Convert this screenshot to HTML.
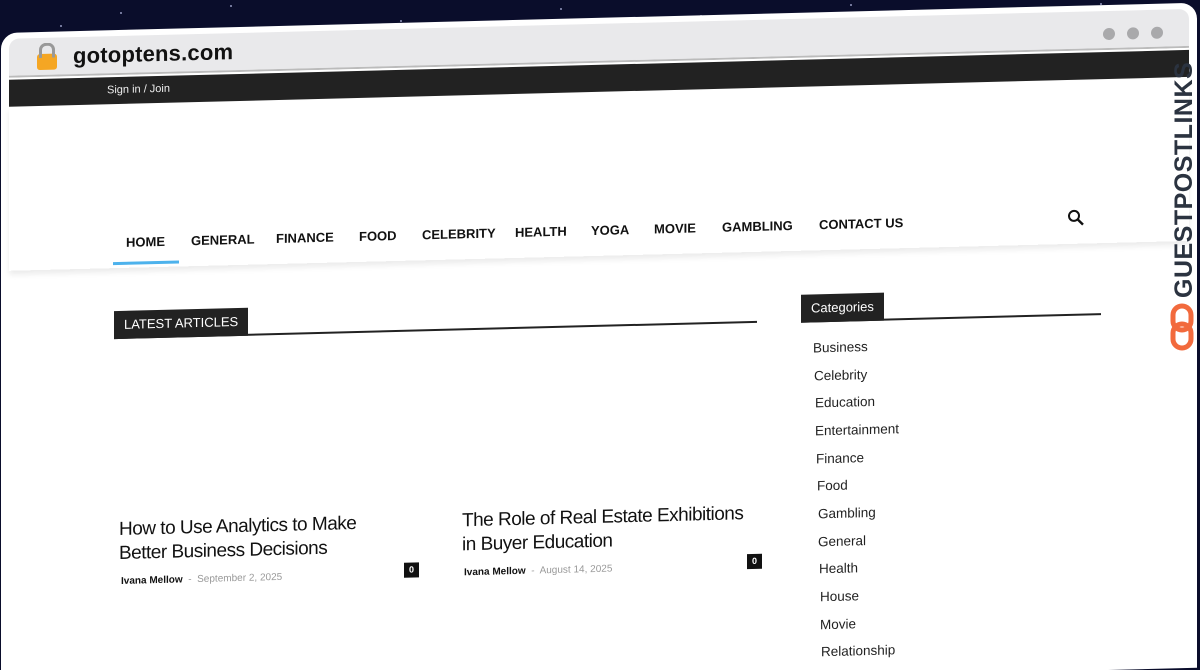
<!DOCTYPE html>
<html><head><meta charset="utf-8"><style>
*{margin:0;padding:0;box-sizing:border-box}
html{height:670px;overflow:hidden}
body{width:1200px;height:670px;overflow:hidden;background:#0a0d2b;font-family:"Liberation Sans","DejaVu Sans",sans-serif;position:relative}
.star{position:absolute;width:2px;height:2px;background:#cfd3ff;border-radius:50%;opacity:.7}
#br{position:absolute;left:1px;top:33px;width:1196px;height:665px;background:#fff;border-radius:16px 16px 0 0;transform:skewY(-1.45deg);transform-origin:0 0;overflow:hidden}
#gray{position:absolute;left:8px;top:6px;right:8px;height:39px;background:#e9e9eb;border-radius:10px 10px 0 0;border-bottom:2px solid #bbb}
#url{position:absolute;left:64px;top:6px;font-size:22px;color:#111;font-weight:bold;letter-spacing:.2px}
.lock{position:absolute;left:28px;top:16px;width:20px;height:16px;background:#f5a623;border-radius:3px}
.lock:before{content:"";position:absolute;left:2px;top:-11px;width:10px;height:12px;border:3px solid #999;border-bottom:none;border-radius:7px 7px 0 0}
.dot{position:absolute;top:17px;width:12px;height:12px;border-radius:50%;background:#a9a9ab}
#dark{position:absolute;left:8px;top:47px;right:8px;height:27px;background:#222}
#dark span{position:absolute;left:98px;top:7px;color:#eee;font-size:11px}
#nav{position:absolute;left:8px;top:75px;right:8px;height:163px;box-shadow:0 4px 6px rgba(0,0,0,.08)}
.ni{position:absolute;top:130px;font-size:13px;font-weight:bold;color:#111}
#ul{position:absolute;left:104px;top:157px;width:66px;height:3px;background:#4db2ec}
.hd{position:absolute;background:#222;color:#fff;font-size:13px;padding:0 10px;height:28px;line-height:28px}
.ln{position:absolute;height:2px;background:#222}
.t{position:absolute;font-size:19px;color:#111;line-height:24px;letter-spacing:-.5px;width:320px;white-space:nowrap}
.m{position:absolute;font-size:10px;color:#999}
.m b{color:#111}
.c{position:absolute;width:15px;height:15px;background:#111;color:#fff;font-size:9px;text-align:center;line-height:15px;font-weight:bold}
.cat{position:absolute;font-size:13.5px;color:#222}
#gp{position:absolute;transform:rotate(-90deg);transform-origin:0 0;font-size:25px;font-weight:bold;color:#2b3340;letter-spacing:.5px;white-space:nowrap}
</style></head><body>
<div class="star" style="left:120px;top:12px"></div><div class="star" style="left:230px;top:5px"></div><div class="star" style="left:400px;top:20px"></div><div class="star" style="left:560px;top:8px"></div><div class="star" style="left:700px;top:15px"></div><div class="star" style="left:850px;top:4px"></div><div class="star" style="left:960px;top:10px"></div><div class="star" style="left:60px;top:25px"></div><div class="star" style="left:330px;top:28px"></div><div class="star" style="left:1100px;top:3px"></div>
<div id="br">
<div id="gray"><div class="lock"></div><div id="url">gotoptens.com</div>
<div class="dot" style="left:1094px"></div><div class="dot" style="left:1118px"></div><div class="dot" style="left:1142px"></div></div>
<div id="dark"><span>Sign in / Join</span></div>
<div id="nav">
<span class="ni" style="left:117px">HOME</span><span class="ni" style="left:182px">GENERAL</span><span class="ni" style="left:267px">FINANCE</span><span class="ni" style="left:350px">FOOD</span><span class="ni" style="left:413px">CELEBRITY</span><span class="ni" style="left:506px">HEALTH</span><span class="ni" style="left:582px">YOGA</span><span class="ni" style="left:645px">MOVIE</span><span class="ni" style="left:713px">GAMBLING</span><span class="ni" style="left:810px">CONTACT US</span>
<div id="ul"></div>
<svg style="position:absolute;left:1058px;top:128px" width="18" height="18" viewBox="0 0 18 18"><circle cx="7" cy="7" r="5" fill="none" stroke="#111" stroke-width="2"/><line x1="11" y1="11" x2="16" y2="16" stroke="#111" stroke-width="2.4"/></svg>
</div>
<div class="hd" style="left:113px;top:281px">LATEST ARTICLES</div><div class="ln" style="left:113px;top:307px;width:643px"></div>
<div class="hd" style="left:800px;top:282px">Categories</div><div class="ln" style="left:800px;top:308px;width:300px"></div>
<div class="t" style="left:118px;top:488px">How to Use Analytics to Make<br>Better Business Decisions</div>
<div class="m" style="left:120px;top:546px"><b>Ivana Mellow</b> &nbsp;-&nbsp; September 2, 2025</div>
<div class="c" style="left:403px;top:540px">0</div>
<div class="t" style="left:461px;top:488px">The Role of Real Estate Exhibitions<br>in Buyer Education</div>
<div class="m" style="left:463px;top:546px"><b>Ivana Mellow</b> &nbsp;-&nbsp; August 14, 2025</div>
<div class="c" style="left:746px;top:540px">0</div>
<div class="cat" style="left:812px;top:328px">Business</div><div class="cat" style="left:813px;top:356px">Celebrity</div><div class="cat" style="left:814px;top:383px">Education</div><div class="cat" style="left:814px;top:411px">Entertainment</div><div class="cat" style="left:815px;top:439px">Finance</div><div class="cat" style="left:816px;top:466px">Food</div><div class="cat" style="left:817px;top:494px">Gambling</div><div class="cat" style="left:817px;top:522px">General</div><div class="cat" style="left:818px;top:549px">Health</div><div class="cat" style="left:819px;top:577px">House</div><div class="cat" style="left:819px;top:605px">Movie</div><div class="cat" style="left:820px;top:632px">Relationship</div>
</div>
<div id="gp" style="left:1170px;top:298px">GUESTPOSTLINKS</div>
<svg style="position:absolute;left:1170px;top:303px" width="24" height="48" viewBox="0 0 24 48"><rect x="3" y="3" width="18" height="24" rx="9" fill="none" stroke="#f26a3d" stroke-width="5"/><rect x="3" y="21" width="18" height="24" rx="9" fill="none" stroke="#f26a3d" stroke-width="5"/></svg>
</body></html>
